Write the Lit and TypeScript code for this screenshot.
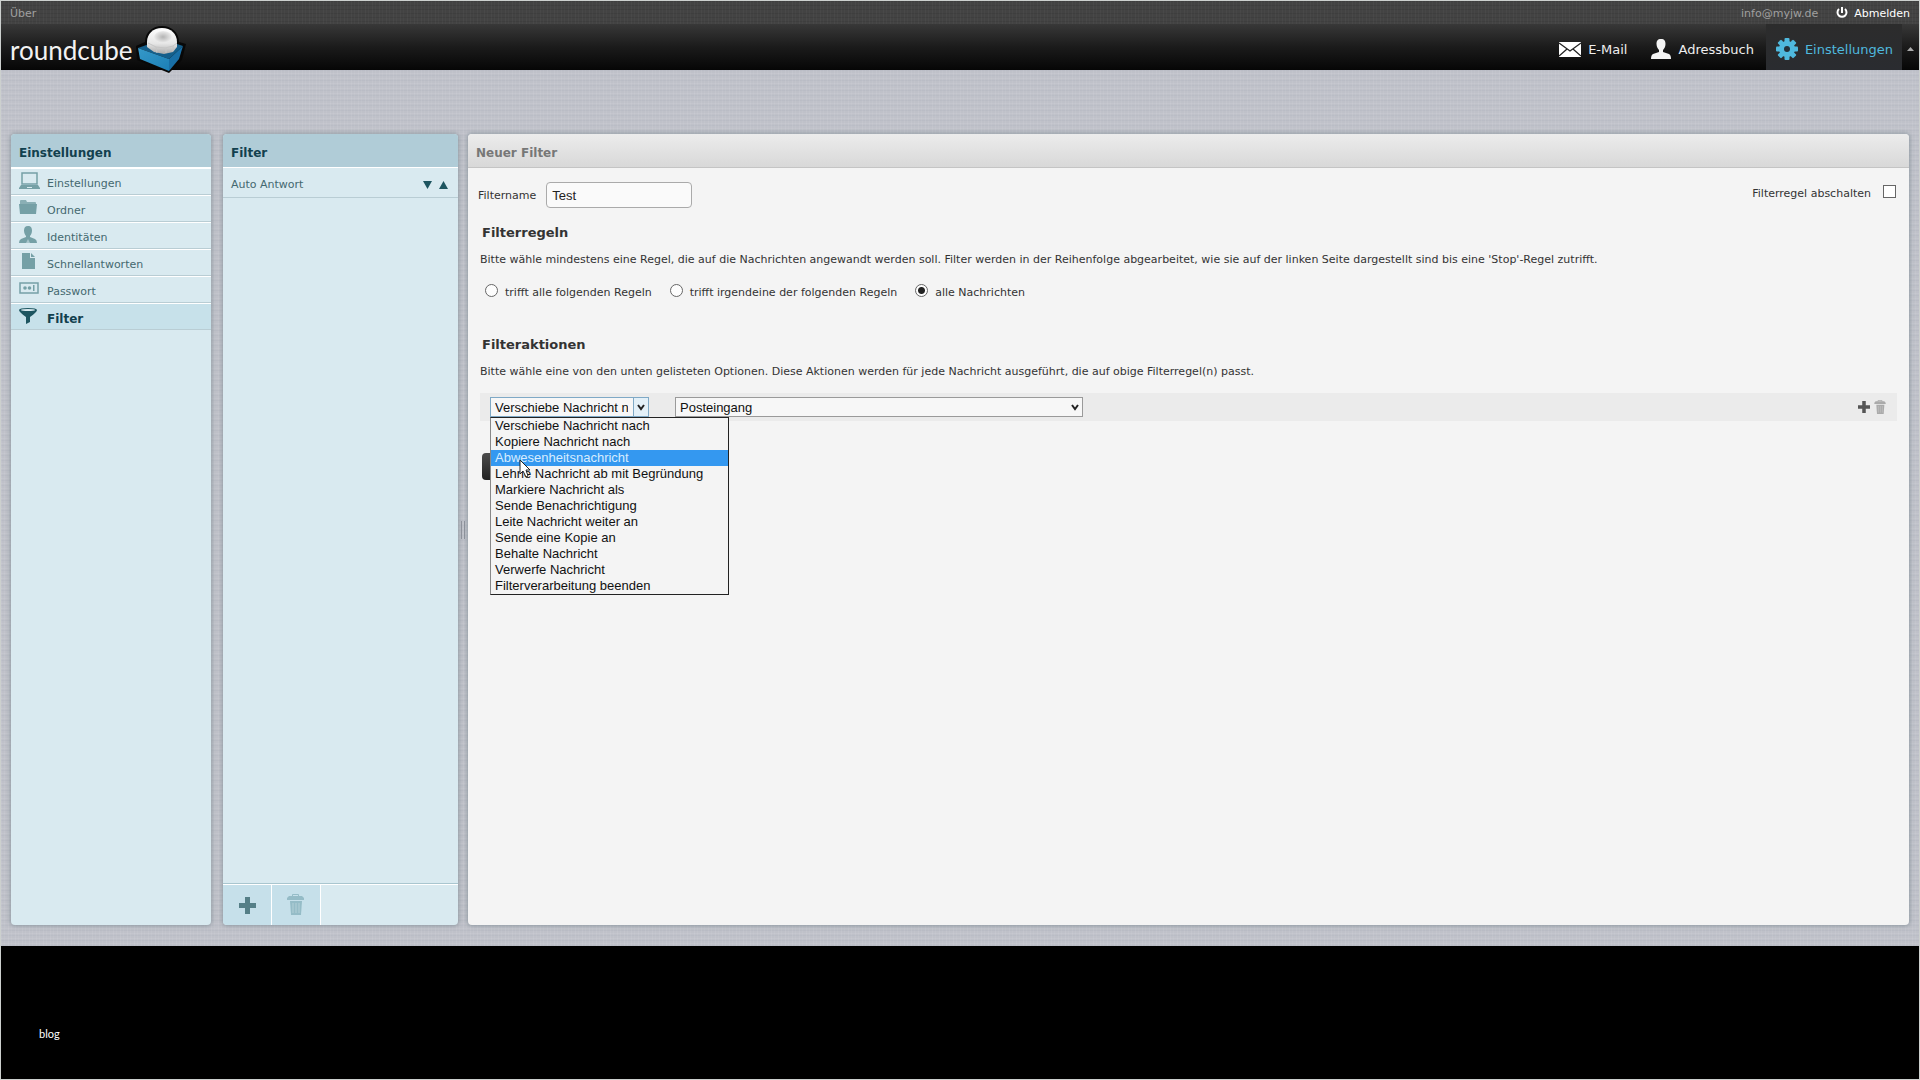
import { LitElement, html, css, svg } from "lit";
import { customElement } from "lit/decorators.js";

const icons = {
  laptop: svg`<path d="M3 1h15v11H3z" fill="none" stroke="currentColor" stroke-width="1.500"/><path d="M2 13h17l2 3v1H0v-1z" fill="currentColor"/><path d="M8 15h5v1H8z" fill="#d9eaf0"/>`,
  folder: svg`<path d="M1 2q0-1 1-1h5l1 2h8q1 0 1 1v1H1z" fill="currentColor" opacity=".8"/><path d="M0 5h18l-1 10H1z" fill="currentColor"/>`,
  user: svg`<path d="M9 0c3 0 4 2 4 4.500S12 9 11 10v1l5 2q2 1 2 4H0q0-3 2-4l5-2v-1C6 9 5 7 5 4.500S6 0 9 0z" fill="currentColor"/><path d="M7 17l2-4 2 4z" fill="#d9eaf0" opacity=".5"/>`,
  page: svg`<path d="M3 0h8v5h5v11H3z" fill="currentColor"/><path d="M12 0l4 4h-4z" fill="currentColor"/>`,
  password: svg`<path d="M1 3h18v10H1z" fill="none" stroke="currentColor" stroke-width="1.500"/><circle cx="6" cy="8" r="1.800" fill="currentColor"/><circle cx="10.500" cy="8" r="1.800" fill="currentColor"/><path d="M14 5h1.500v6H14z" fill="currentColor"/>`,
  funnel: svg`<path d="M0 3q0-2 9-2t9 2q0 2-7 7v5l-4 2v-7Q0 5 0 3z" fill="currentColor"/><ellipse cx="9" cy="3" rx="7" ry="1" fill="#d9eaf0"/>`,
};

const trash = svg`<path d="M5 2V1q0-1 1-1h5q1 0 1 1v1h3l2 2v2H0V4l2-2zM6 2h5V1H6z" fill="currentColor"/><path d="M3 7h12l-1 14H4z" fill="currentColor"/><path d="M6 9v10M9 9v10M12 9v10" stroke="#fff" stroke-opacity=".3" fill="none"/>`;
const plus = svg`<path d="M6 0h5v6h6v5h-6v6H6v-6H0V6h6z" fill="currentColor"/>`;

const sections: [keyof typeof icons, string][] = [
  ["laptop", "Einstellungen"],
  ["folder", "Ordner"],
  ["user", "Identitäten"],
  ["page", "Schnellantworten"],
  ["password", "Passwort"],
  ["funnel", "Filter"],
];

const actions = [
  "Verschiebe Nachricht nach",
  "Kopiere Nachricht nach",
  "Abwesenheitsnachricht",
  "Lehne Nachricht ab mit Begründung",
  "Markiere Nachricht als",
  "Sende Benachrichtigung",
  "Leite Nachricht weiter an",
  "Sende eine Kopie an",
  "Behalte Nachricht",
  "Verwerfe Nachricht",
  "Filterverarbeitung beenden",
];

@customElement("app-root")
export class AppRoot extends LitElement {
  static styles = css`
    :host {
      display: flex;
      flex-direction: column;
      box-sizing: border-box;
      min-height: 100vh;
      border: 1px solid #ccd0ce;
      font-family: Verdana, "DejaVu Sans", sans-serif;
      font-size: 11px;
      color: #333;
      background: #000;
    }
    * { box-sizing: border-box; }
    a { color: inherit; text-decoration: none; }
    h1, h2, h3, p, ul { margin: 0; padding: 0; }
    ul { list-style: none; }
    svg { display: block; }
    button { border: 0; padding: 0; background: none; font: inherit; color: inherit; }

    .topline {
      display: flex;
      align-items: center;
      height: 23px;
      padding: 1px 9px 0;
      gap: 18px;
      color: #a0a0a0;
      background:
        repeating-linear-gradient(90deg, #ffffff08 0 1px, transparent 1px 3px, #ffffff06 3px 4px, transparent 4px 7px),
        repeating-linear-gradient(#00000014 0 1px, transparent 1px 4px),
        #434343;
    }
    .topline .account { margin-left: auto; }
    .logout { display: flex; align-items: center; gap: 6px; color: #fff; }

    .header {
      display: flex;
      align-items: stretch;
      height: 46px;
      padding-left: 9px;
      background: linear-gradient(#383838, #1b1b1b 50%, #060606);
      color: #fff;
    }
    .logo { display: flex; flex: none; margin-right: auto; height: 51px; z-index: 1; }
    .tasks { display: flex; font-size: 13px; }
    .task { display: flex; align-items: center; gap: 7px; padding: 4px 12px 0; color: #eee; }
    .task.selected { color: #4fb9de; background: linear-gradient(#2c2c2c, #2a2c30); padding: 4px 9px 0 10px; }
    .toggle { width: 17px; display: grid; place-items: center; padding-top: 3px; }

    .main {
      flex: 1;
      display: flex;
      padding: 64px 10px 21px;
      background:
        repeating-linear-gradient(90deg, #ffffff12 0 1px, transparent 1px 3px, #ffffff0c 3px 4px, transparent 4px 7px),
        repeating-linear-gradient(#6a78900f 0 1px, transparent 1px 3px, #ffffff12 3px 4px, transparent 4px 5px),
        #bfc1c9;
    }
    .panel {
      display: flex;
      flex-direction: column;
      border-radius: 4px;
      background: #d9eaf0;
      box-shadow: 0 0 4px 1px #7c8a92b0;
      overflow: hidden;
    }
    .sections { flex: 0 0 200px; margin-right: 12px; }
    .filters { flex: 0 0 235px; }
    .splitter { flex: 0 0 10px; display: grid; place-items: center; }
    .grip { width: 4px; height: 18px; border: solid #8e929b; border-width: 0 1px; }
    .editor { flex: 1; min-width: 0; background: #f4f4f4; overflow: visible; }

    .title {
      height: 34px;
      padding: 0 8px;
      font-size: 12px;
      line-height: 38px;
      font-weight: bold;
      color: #12404e;
      background: #b0ccd7;
      border-bottom: 1px solid #fff;
    }
    .editor .title {
      border-radius: 4px 4px 0 0;
      color: #777;
      background: linear-gradient(#ececec, #d8d8d8);
      border-bottom: 1px solid #c4c4c4;
    }
    .section {
      display: flex;
      align-items: center;
      height: 27px;
      padding: 4px 0 0 8px;
      color: #44686f;
      border-top: 1px solid #fff;
      border-bottom: 1px solid #b9cdd4;
    }
    .section .glyph { width: 28px; margin-bottom: 6px; color: #75a0a6; }
    .section.selected { font-weight: bold; font-size: 12px; color: #12404e; background: #c7e1ea; }
    .section.selected .glyph { color: #1d5560; }
    .filter {
      display: flex;
      align-items: center;
      height: 30px;
      padding: 4px 10px 0 8px;
      gap: 7px;
      color: #44686f;
      border-bottom: 1px solid #b9cdd4;
    }
    .filter .name { flex: 1; }
    .toolbar {
      display: flex;
      height: 42px;
      margin-top: auto;
      border-top: 1px solid #a9c6cf;
      box-shadow: inset 0 1px #fff;
      padding-top: 1px;
    }
    .tool { width: 49px; display: grid; place-items: center; background: #c6e0ea; border-right: 1px solid #fff; color: #557f87; }
    .tool.disabled { color: #95bcc7; }

    .form { padding: 13px 12px 20px; }
    .line { display: flex; align-items: center; height: 28px; }
    .name-label { margin: 0 10px 0 -2px; }
    .name-input {
      width: 146px;
      height: 26px;
      padding: 0 5px;
      border: 1px solid #aaa;
      border-radius: 4px;
      background: #fafafa;
      font: 13px "Liberation Sans", Arial, sans-serif;
      color: #222;
    }
    .off { display: flex; align-items: center; gap: 12px; margin: 0 1px 4px auto; }
    .box { appearance: none; width: 13px; height: 13px; margin: 0 0 4px; border: 1px solid #666; background: #fff; }
    .heading { margin-top: 14px; padding-left: 2px; font-size: 13px; line-height: 20px; font-weight: bold; }
    .choices + .heading { margin-top: 34px; }
    .hint { margin-top: 9px; line-height: 16px; }
    .choices { display: flex; align-items: center; margin-top: 15px; padding-left: 5px; height: 18px; }
    .choices label { margin-right: 18px; }
    .dot { appearance: none; width: 13px; height: 13px; margin: 0 7px 3px 0; border: 1px solid #666; border-radius: 50%; background: #fdfdfd; }
    .dot:checked { background: radial-gradient(circle, #222 0 3px, #fdfdfd 4px); }

    .action { display: flex; align-items: center; height: 28px; margin-top: 13px; padding: 0 10px; background: #ebebeb; }
    .picker { position: relative; margin-right: 26px; }
    .select {
      display: block;
      appearance: none;
      height: 20px;
      padding: 0 20px 0 4px;
      border: 1px solid #9a9a9a;
      border-radius: 0;
      background: #f7f7f7;
      font: 13px "Liberation Sans", Arial, sans-serif;
      color: #111;
    }
    .kind { width: 159px; border-color: #7fa9c6; }
    .target { width: 408px; }
    .chevron { position: absolute; right: 1px; top: 1px; width: 15px; height: 18px; display: grid; place-items: center; pointer-events: none; }
    .kind + .chevron { border-left: 1px solid #7fa9c6; background: #e3f0f8; }
    .options {
      position: absolute;
      top: 20px;
      left: 0;
      width: 239px;
      z-index: 2;
      border: 1px solid #222;
      border-left-color: #888;
      background: #f4f4f4;
      font: 13px/16px "Liberation Sans", Arial, sans-serif;
      color: #111;
    }
    .option { padding-left: 4px; white-space: nowrap; }
    .option.active { background: #3498f0; color: #d6ecff; }
    .pointer { position: absolute; left: 29px; top: 62px; z-index: 3; }
    .row-tools { display: flex; align-items: center; gap: 4px; margin: 0 1px 0 auto; color: #555; }
    .row-tools .disabled { color: #aaa; }
    .save { display: block; width: 80px; height: 27px; margin: 32px 0 0 2px; border-radius: 4px; background: linear-gradient(#4c4c4c, #222); }

    .footer { height: 133px; padding: 79px 38px 0; color: #fff; font: 11px/18px Lato, sans-serif; }
  `;

  render() {
    return html`
      <nav class="topline">
        <a href="#about">Über</a>
        <span class="account">info@myjw.de</span>
        <a class="logout" href="#logout">
          <svg width="12" height="12" viewBox="0 0 12 12" fill="none" stroke="currentColor" stroke-width="2"><path d="M6 0v6M3 2a4.500 4.500 0 1 0 6 0"/></svg>
          Abmelden
        </a>
      </nav>
      <header class="header">
        <a class="logo" href="#home" aria-label="roundcube">${this.logo()}</a>
        <nav class="tasks">
          <a class="task" href="#mail">
            <svg width="22" height="15" viewBox="0 0 22 15"><path d="M0 0h22v15H0z" fill="#fff"/><path d="M0 1l11 8 11-8M0 14l8-7M22 14l-8-7" fill="none" stroke="#222" stroke-width="1.300"/></svg>
            E-Mail
          </a>
          <a class="task" href="#contacts">
            <svg width="20" height="20" viewBox="0 0 20 20"><path d="M10 0c3.500 0 4.500 2 4.500 5S13 10 12 11v2l6 2q2 1 2 5H0q0-4 2-5l6-2v-2C7 10 5.500 8 5.500 5S6.500 0 10 0z" fill="#f4f4f4"/></svg>
            Adressbuch
          </a>
          <a class="task selected" href="#settings">
            <svg width="22" height="22" viewBox="-11 -11 22 22" fill="currentColor">
              ${[0, 45, 90, 135].map((a) => svg`<rect x="-2.500" y="-11" width="5" height="22" rx="1" transform="rotate(${a})"/>`)}
              <circle r="8"/><circle r="3" fill="#24313a"/>
            </svg>
            Einstellungen
          </a>
          <button class="toggle" aria-label="Kopfzeile einklappen"><svg width="7" height="4"><path d="M0 4l3.500-4L7 4z" fill="#aaa"/></svg></button>
        </nav>
      </header>
      <main class="main">
        <section class="panel sections">
          <h2 class="title">Einstellungen</h2>
          <ul>
            ${sections.map(([icon, name]) => html`<li>
              <a class="section ${icon === "funnel" ? "selected" : ""}" href="#${icon}">
                <span class="glyph"><svg width="21" height="17" viewBox="0 0 21 17">${icons[icon]}</svg></span>${name}
              </a></li>`)}
          </ul>
        </section>
        <section class="panel filters">
          <h2 class="title">Filter</h2>
          <div class="filter">
            <span class="name">Auto Antwort</span>
            <button aria-label="Nach unten"><svg width="9" height="8"><path d="M0 0h9L4.500 8z" fill="#1d5560"/></svg></button>
            <button aria-label="Nach oben"><svg width="9" height="8"><path d="M0 8h9L4.500 0z" fill="#1d5560"/></svg></button>
          </div>
          <div class="toolbar">
            <button class="tool" aria-label="Filter hinzufügen"><svg width="17" height="17">${plus}</svg></button>
            <button class="tool disabled" aria-label="Filter löschen"><svg width="18" height="22">${trash}</svg></button>
          </div>
        </section>
        <div class="splitter"><div class="grip"></div></div>
        <section class="panel editor">
          <h2 class="title">Neuer Filter</h2>
          <form class="form">
            <div class="line">
              <label class="name-label" for="name">Filtername</label>
              <input class="name-input" id="name" value="Test" />
              <div class="off">
                <label for="off">Filterregel abschalten</label>
                <input class="box" id="off" type="checkbox" />
              </div>
            </div>
            <h3 class="heading">Filterregeln</h3>
            <p class="hint">Bitte wähle mindestens eine Regel, die auf die Nachrichten angewandt werden soll. Filter werden in der Reihenfolge abgearbeitet, wie sie auf der linken Seite dargestellt sind bis eine 'Stop'-Regel zutrifft.</p>
            <div class="choices">
              <input class="dot" type="radio" name="match" id="all" /><label for="all">trifft alle folgenden Regeln</label>
              <input class="dot" type="radio" name="match" id="any" /><label for="any">trifft irgendeine der folgenden Regeln</label>
              <input class="dot" type="radio" name="match" id="every" checked /><label for="every">alle Nachrichten</label>
            </div>
            <h3 class="heading">Filteraktionen</h3>
            <p class="hint">Bitte wähle eine von den unten gelisteten Optionen. Diese Aktionen werden für jede Nachricht ausgeführt, die auf obige Filterregel(n) passt.</p>
            <div class="action">
              <div class="picker">
                <select class="select kind" aria-label="Aktion">${actions.map((a) => html`<option>${a}</option>`)}</select>
                <span class="chevron">${this.chevron()}</span>
                <ul class="options" role="listbox" aria-label="Aktion">
                  ${actions.map((a, i) => html`<li class="option ${i === 2 ? "active" : ""}" role="option" aria-selected=${i === 2}>${a}</li>`)}
                </ul>
                <svg class="pointer" width="12" height="19" viewBox="0 0 12 19"><path d="M1 1v14l3-3 3 6 2-1-2-6h4z" fill="#fff" stroke="#222"/></svg>
              </div>
              <div class="picker">
                <select class="select target" aria-label="Zielordner"><option>Posteingang</option></select>
                <span class="chevron">${this.chevron()}</span>
              </div>
              <div class="row-tools">
                <button type="button" aria-label="Aktion hinzufügen"><svg width="12" height="12" viewBox="0 0 17 17">${plus}</svg></button>
                <button type="button" class="disabled" aria-label="Aktion löschen"><svg width="12" height="14" viewBox="0 0 17 21">${trash}</svg></button>
              </div>
            </div>
            <button type="button" class="save" aria-label="Speichern"></button>
          </form>
        </section>
      </main>
      <footer class="footer">blog</footer>
    `;
  }

  private chevron() {
    return html`<svg width="8" height="7" viewBox="0 0 8 7"><path d="M1 1l3 4 3-4" fill="none" stroke="#222" stroke-width="2"/></svg>`;
  }

  private logo() {
    return html`<svg width="178" height="51" viewBox="0 0 178 51">
      <defs>
        <linearGradient id="ball" x2="0" y2="1">
          <stop offset="0" stop-color="#fff"/><stop offset=".6" stop-color="#e6e6e6"/><stop offset="1" stop-color="#a9a9a9"/>
        </linearGradient>
        <radialGradient id="hollow"><stop stop-color="#b4b4b4"/><stop offset="1" stop-color="#ececec"/></radialGradient>
        <linearGradient id="front" x2="1" y2="1"><stop stop-color="#3599c9"/><stop offset="1" stop-color="#1c7fb6"/></linearGradient>
      </defs>
      <text x="0" y="36" font-family="Lato, sans-serif" font-size="26" fill="#f2f2f2">roundcube</text>
      <path d="M126 22l9-4C135 8 143 2 152 2s17 6 17 16l7 2-4 16-13 13-32-13z" fill="#080808"/>
      <path d="M128 24l14-5h22l9 3-14 13z" fill="#155f8b"/>
      <path d="M128 24l31 11v12l-29-12z" fill="url(#front)"/>
      <path d="M159 35l14-13-4 13-10 12z" fill="#196fa6"/>
      <path d="M137 18C137 10 143 4 152 4s15 6 15 14v5l-4 5-9 2-10-2-7-5z" fill="url(#ball)"/>
      <ellipse cx="153" cy="13" rx="9" ry="6" fill="url(#hollow)"/>
      <path d="M138 19l8 4 9 1 8-2 4-3M146 23l1 6M156 24v5M163 22v5" fill="none" stroke="#c6c6c6"/>
    </svg>`;
  }
}
